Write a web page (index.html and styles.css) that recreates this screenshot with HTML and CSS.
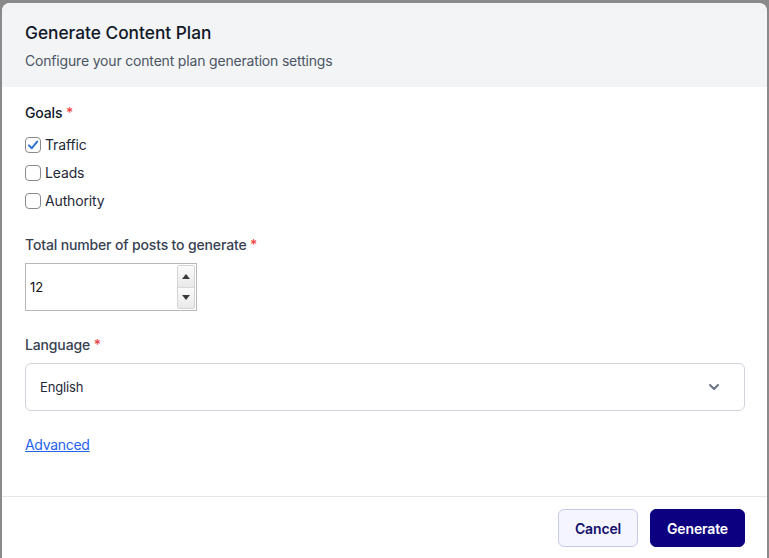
FILE: index.html
```html
<!DOCTYPE html>
<html lang="en">
<head>
<meta charset="utf-8">
<title>Generate Content Plan</title>
<link rel="stylesheet" href="styles.css">
</head>
<body>
<div class="modal">
  <header class="modal-header">
    <h1 class="title">Generate Content Plan</h1>
    <p class="subtitle">Configure your content plan generation settings</p>
  </header>
  <div class="modal-body">
    <div class="field">
      <div class="label label-strong">Goals <span class="req">*</span></div>
      <div class="checks">
        <label class="check">
          <span class="box">
            <svg width="12" height="12" viewBox="0 0 12 12"><path d="M2 6.4 L4.8 9.2 L10.2 2.6" fill="none" stroke="#2f74d0" stroke-width="2" stroke-linecap="round" stroke-linejoin="round"/></svg>
          </span>
          <span>Traffic</span>
        </label>
        <label class="check"><span class="box"></span><span>Leads</span></label>
        <label class="check"><span class="box"></span><span>Authority</span></label>
      </div>
    </div>
    <div class="field">
      <div class="label">Total number of posts to generate <span class="req">*</span></div>
      <div class="number">
        <input class="number-input" type="text" value="12">
        <div class="spinner">
          <div class="spin spin-up"><span class="tri-up"></span></div>
          <div class="spin spin-down"><span class="tri-down"></span></div>
        </div>
      </div>
    </div>
    <div class="field">
      <div class="label">Language <span class="req">*</span></div>
      <div class="select">
        <span>English</span>
        <svg class="chev" width="14" height="14" viewBox="0 0 14 14"><path d="M3 5 L7 9 L11 5" fill="none" stroke="#6b7280" stroke-width="2" stroke-linecap="round" stroke-linejoin="round"/></svg>
      </div>
    </div>
    <div class="field">
      <a class="link" href="#">Advanced</a>
    </div>
  </div>
  <footer class="modal-footer">
    <button class="btn btn-cancel">Cancel</button>
    <button class="btn btn-primary">Generate</button>
  </footer>
</div>
</body>
</html>
```

FILE: styles.css
```css
* { box-sizing: border-box; }
html, body { margin: 0; padding: 0; }
body {
  background: #8a8a8a;
  font-family: Inter, "Noto Sans", "Liberation Sans", sans-serif;
  color: #1f2937;
  height: 558px;
  overflow: hidden;
  letter-spacing: -0.15px;
}
.modal {
  margin: 3px 2px 0 2px;
  background: #ffffff;
  border-radius: 8px 8px 0 0;
  height: 560px;
  display: flex;
  flex-direction: column;
  overflow: hidden;
}
.modal-header {
  background: #f3f4f6;
  padding: 16px 22px 16px 23px;
  height: 84px;
}
.title {
  margin: 0;
  font-size: 17.3px;
  line-height: 28px;
  font-weight: 500;
  color: #111827;
  letter-spacing: 0;
}
.subtitle {
  margin: 4px 0 0;
  font-size: 14px;
  line-height: 20px;
  color: #4b5563;
  letter-spacing: -0.18px;
}
.modal-body {
  padding: 16px 22px 0 23px;
  display: flex;
  flex-direction: column;
  gap: 24px;
  height: 409px;
}
.field { display: flex; flex-direction: column; gap: 8px; }
.label {
  font-size: 14px;
  line-height: 20px;
  font-weight: 500;
  color: #374151;
}
.label-strong { color: #111827; }
.req { color: #ef4444; }
.checks {
  display: flex;
  flex-direction: column;
  gap: 8px;
  margin-top: 4px;
}
.check {
  display: flex;
  align-items: center;
  gap: 4px;
  font-size: 14px;
  line-height: 20px;
  color: #1f2937;
}
.box {
  width: 16px;
  height: 16px;
  border: 1px solid #8a8a8a;
  border-radius: 4px;
  background: #fff;
  display: flex;
  align-items: center;
  justify-content: center;
}
.number {
  width: 172px;
  height: 48px;
  border: 1px solid #b8b8b8;
  display: flex;
  align-items: center;
  background: #fff;
}
.number-input {
  flex: 1;
  min-width: 0;
  border: 0;
  outline: 0;
  font-family: inherit;
  font-size: 13px;
  color: #111;
  padding: 0 0 0 4px;
  background: transparent;
}
.spinner {
  width: 18px;
  height: 44px;
  margin-right: 1px;
  display: flex;
  flex-direction: column;
  border: 1px solid #d4d4d4;
  border-radius: 2px;
  overflow: hidden;
}
.spin {
  flex: 1;
  display: flex;
  align-items: center;
  justify-content: center;
  background: linear-gradient(#fbfbfb, #e9e9e9);
}
.spin-up { border-bottom: 1px solid #d8d8d8; }
.tri-up {
  width: 0; height: 0;
  border-left: 4px solid transparent;
  border-right: 4px solid transparent;
  border-bottom: 5px solid #3a3a3a;
}
.tri-down {
  width: 0; height: 0;
  border-left: 4px solid transparent;
  border-right: 4px solid transparent;
  border-top: 5px solid #3a3a3a;
}
.select {
  height: 48px;
  border: 1px solid #d1d5db;
  border-radius: 6px;
  display: flex;
  align-items: center;
  justify-content: space-between;
  padding: 0 23px 0 14px;
  font-size: 13px;
  color: #1f2937;
}
.link {
  font-size: 14px;
  line-height: 20px;
  color: #2563eb;
  text-decoration: underline;
  align-self: flex-start;
  letter-spacing: -0.3px;
}
.modal-footer {
  border-top: 1px solid #e5e7eb;
  padding: 12px 22px 12px 23px;
  display: flex;
  justify-content: flex-end;
  gap: 12px;
}
.btn {
  height: 38px;
  border-radius: 6px;
  font-family: inherit;
  font-size: 14px;
  font-weight: 600;
  padding: 0 12px;
  cursor: pointer;
  letter-spacing: -0.15px;
}
.btn-cancel {
  width: 80px;
  background: #f5f5ff;
  border: 1px solid #c9c9ee;
  color: #13106b;
}
.btn-primary {
  width: 95px;
  background: #0c0080;
  border: 1px solid #0c0080;
  color: #ffffff;
}
```
